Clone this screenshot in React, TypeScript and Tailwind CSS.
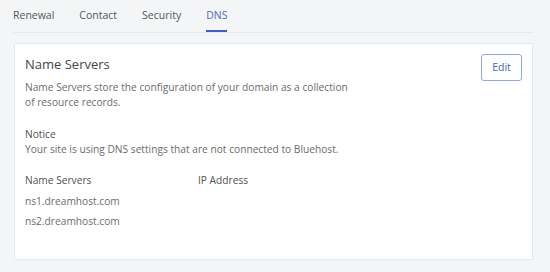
import React from 'react';

const tabs = ['Renewal', 'Contact', 'Security', 'DNS'];

const App: React.FC = () => {
  return (
    <div
      className="w-[550px] h-[272px] bg-[#f3f5f7] pl-[13px] pr-[17px] overflow-hidden"
      style={{ fontFamily: '"Open Sans", sans-serif' }}
    >
      {/* Tabs */}
      <div className="flex gap-[25px] border-b border-[#e6e9ed] h-[33px] items-stretch">
        {tabs.map((t) => (
          <div
            key={t}
            className={
              t === 'DNS'
                ? 'flex items-center text-[10.5px] text-[#5169b8] border-b-2 border-[#3f5fbf] pt-[2px]'
                : 'flex items-center text-[10.5px] text-[#555] border-b-2 border-transparent pt-[2px]'
            }
          >
            {t}
          </div>
        ))}
      </div>

      {/* Card */}
      <div className="mt-[10px] ml-[1px] h-[217px] bg-white border border-[#e5e8ec] rounded-[2px] pl-[10px] pr-[10px] pt-[9px]">
        <div className="flex justify-between">
          <div>
            <h2 className="text-[13px] text-[#464646] leading-[22px]">Name Servers</h2>
            <p className="mt-[5px] text-[10.2px] text-[#6b6b6b] leading-[15px] w-[332px]">
              Name Servers store the configuration of your domain as a collection of resource records.
            </p>
          </div>
          <button className="mt-[1px] h-[27px] w-[41px] border border-[#95a6dc] rounded-[3px] text-[10.5px] text-[#4a63b0] bg-white">
            Edit
          </button>
        </div>

        <div className="mt-[17px]">
          <div className="text-[10.2px] text-[#505050] leading-[15px]">Notice</div>
          <div className="text-[10.2px] text-[#6b6b6b] leading-[15px]">
            Your site is using DNS settings that are not connected to Bluehost.
          </div>
        </div>

        <div className="mt-[13px] grid grid-cols-[173px_1fr] text-[10.2px] leading-[20.5px]">
          <div className="text-[#505050]">Name Servers</div>
          <div className="text-[#505050]">IP Address</div>
          <div className="text-[#6b6b6b]">ns1.dreamhost.com</div>
          <div></div>
          <div className="text-[#6b6b6b]">ns2.dreamhost.com</div>
          <div></div>
        </div>
      </div>
    </div>
  );
};

export default App;
